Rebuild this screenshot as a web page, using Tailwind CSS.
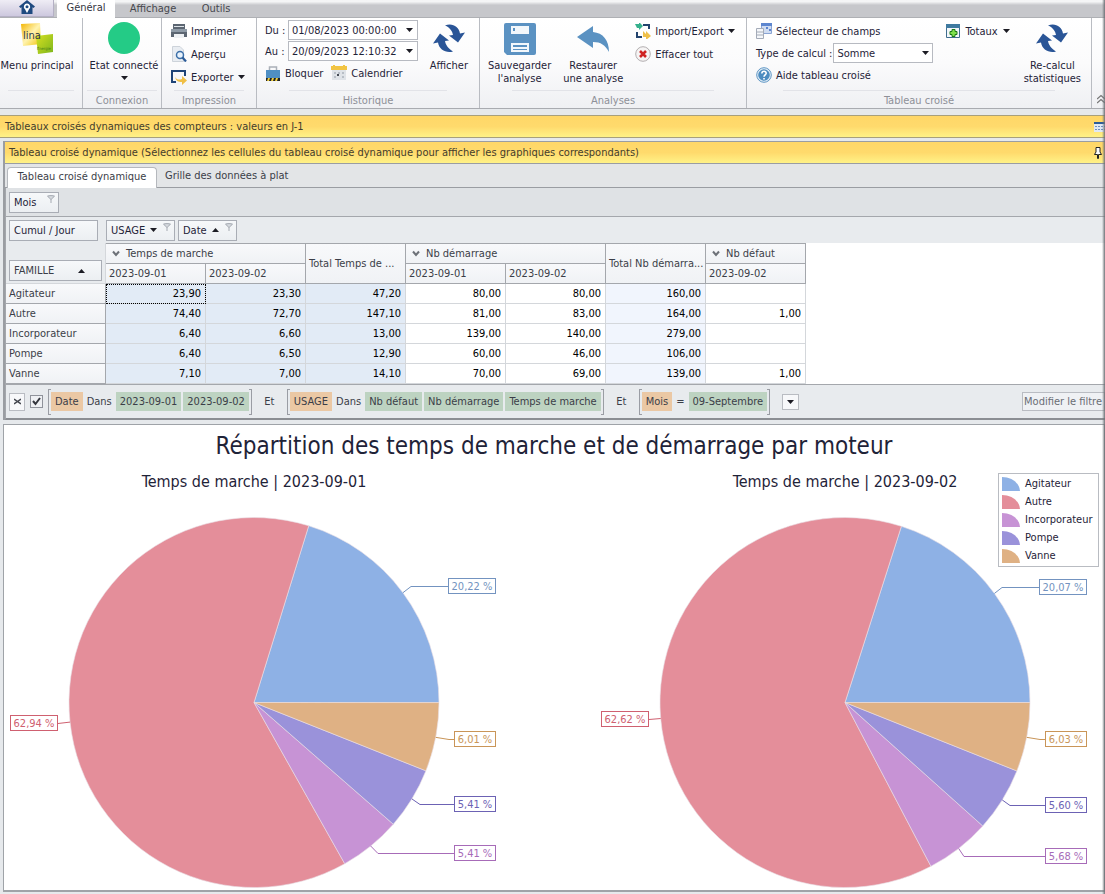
<!DOCTYPE html>
<html lang="fr">
<head>
<meta charset="utf-8">
<title>Tableaux croisés dynamiques</title>
<script src="https://cdn.jsdelivr.net/npm/@tailwindcss/browser@4"></script>
</head>
<body class="relative flex min-h-screen flex-col overflow-x-hidden bg-[#e6e9ec] font-['DejaVu_Sans_Condensed','Noto_Sans',sans-serif] text-[11px] leading-[13px] text-[#1f2338]">

<svg class="hidden">
  <defs>
    <symbol id="refresh" viewBox="0 0 32 32">
      <path fill="#2a5597" d="M12 3C19 0 26 4 27 11L32 10 25 20 16 13 20 12.500C19.500 9 17 5 12 3Z"/>
      <path fill="#2a5597" d="M20 29C13 31 6 27 5 20L0 21 7 11 16 18 12 18.500C12.500 22 15 26 20 29Z"/>
    </symbol>
    <symbol id="down" viewBox="0 0 7 4"><path fill="#1c1c24" d="M0 0H7L3.500 4Z"/></symbol>
    <symbol id="funnel" viewBox="0 0 8 8"><path fill="#d5d9de" stroke="#a4a9b1" d="M.5 1.200C2 .4 6 .4 7.500 1.200L4.500 4H3.500L.5 1.200ZM4 4V8"/></symbol>
    <symbol id="chev" viewBox="0 0 8 7"><path fill="none" stroke="#6d7178" stroke-width="2" d="M1 1.500L4 5 7 1.500"/></symbol>
  </defs>
</svg>

<!-- Ribbon tabs -->
<nav class="flex h-[18px] items-stretch border-b border-[#aeb0b4] bg-linear-to-b from-[#f4f5f6] from-10% to-[#c6c7cb] to-30% text-[#46484e]">
  <button aria-label="Accueil" class="flex w-[54px] items-start justify-center border-r border-b border-[#b4b0c4] bg-linear-to-b from-[#efedf5] to-[#cdc8de]">
    <svg class="h-[14px] w-4" viewBox="0 0 16 14"><path fill="#1f4a80" d="M8 0L16 6.500 14.500 8 13.500 7.300V14H2.500V7.300L1.500 8 0 6.500Z"/><path fill="#fff" d="M8 3.500A3.200 3.200 0 0 1 10 9.200L8 13 6 9.200A3.200 3.200 0 0 1 8 3.500Z"/><circle cx="8" cy="6.800" r="1.500" fill="#1f4a80"/></svg>
  </button>
  <button class="-mb-px ml-[3px] w-[58px] bg-white pb-[3px] text-[#33353f]">Général</button>
  <button class="w-[76px] pb-px">Affichage</button>
  <button class="w-[50px] pb-px">Outils</button>
</nav>

<!-- Ribbon -->
<header class="flex h-[91px] shrink-0 overflow-hidden border-b border-[#a9abb0] bg-linear-to-b from-white via-[#fbfbfc] to-[#eff0f3]">
  <section class="flex w-[83px] shrink-0 flex-col border-r border-[#b9bcc2]">
    <button class="flex flex-1 flex-col items-center gap-1 pt-1 pr-2 whitespace-nowrap">
      <svg class="h-[33px] w-8" viewBox="0 0 32 33">
        <defs><linearGradient id="ly" x2="1" y2="1"><stop stop-color="#f3b400"/><stop offset=".5" stop-color="#fff3b0"/><stop offset="1" stop-color="#f2c100"/></linearGradient><linearGradient id="lg" x2="1" y2="1"><stop stop-color="#d9e021"/><stop offset="1" stop-color="#7db61c"/></linearGradient></defs>
        <path fill="url(#ly)" d="M0 2L19 1 20 22 2 24Z"/><path fill="url(#lg)" d="M15 14L32 12V30L17 32Z"/>
        <text x="2" y="17" font-size="11" fill="#2d3a4a">lina</text><text x="16" y="28" font-size="4" fill="#47791b">Énergie</text>
      </svg>
      Menu principal
    </button>
    <div class="mx-2 h-[18px] border-t border-[#e2e3e8]"></div>
  </section>

  <section class="flex w-[79px] shrink-0 flex-col border-r border-[#b9bcc2]">
    <button class="flex flex-1 flex-col items-center gap-1 pt-1 pl-1 whitespace-nowrap">
      <span class="h-[33px] w-8"><span class="block size-8 rounded-full bg-[#24cb86]"></span></span>
      Etat connecté
      <svg class="h-1 w-[7px]"><use href="#down"/></svg>
    </button>
    <h2 class="mx-1 h-[18px] border-t border-[#e2e3e8] pt-[3px] text-center text-[#8e9098]">Connexion</h2>
  </section>

  <section class="flex w-[95px] shrink-0 flex-col border-r border-[#b9bcc2]">
    <div class="flex flex-1 flex-col items-start gap-[5px] pt-1 pl-[9px]">
      <button class="flex h-[18px] items-center gap-1"><svg class="size-4" viewBox="0 0 16 16"><path fill="#5c6672" d="M2 1H14V6H2Z"/><path fill="#dde3e8" d="M3 3H13V4H3Z"/><path fill="#8f9ba7" d="M0 6H16V9H0Z"/><path fill="#5c6672" d="M0 9H16V14H0Z"/><path fill="#eef1f4" d="M3 11H13V15H3Z"/></svg>Imprimer</button>
      <button class="flex h-[18px] items-center gap-1"><svg class="size-4" viewBox="0 0 16 16"><path fill="#e9edf2" stroke="#cdd3da" d="M1.500.5H9L12.500 4V15.500H1.500Z"/><circle cx="9" cy="9" r="3.500" fill="#e8f2fc" stroke="#3a6ea8" stroke-width="1.500"/><path stroke="#2c5c98" stroke-width="2.200" d="M11.500 11.500L15 15.500"/></svg>Aperçu</button>
      <button class="flex h-[18px] items-center gap-1"><svg class="size-4" viewBox="0 0 16 16"><path fill="none" stroke="#1f4478" stroke-width="2" d="M5 13H1V2H14V7"/><path fill="#f0bf45" d="M4 8C6 11 8 11 11 10V7L16 11.500 11 16V13C7 13 5 12 4 8Z"/></svg>Exporter<svg class="h-1 w-[7px]"><use href="#down"/></svg></button>
    </div>
    <h2 class="mx-3 h-[18px] border-t border-[#e2e3e8] pt-[3px] text-center text-[#8e9098]">Impression</h2>
  </section>

  <section class="flex w-[223px] shrink-0 flex-col border-r border-[#b9bcc2]">
    <div class="flex flex-1 justify-between pt-[2px] pr-[11px] pl-2">
      <div class="flex flex-col gap-px">
        <label class="flex items-center"><span class="w-[23px]">Du :</span>
          <span class="flex h-5 w-[130px] items-center border border-[#b7bac1] bg-white pr-1"><input value="01/08/2023 00:00:00" class="w-full min-w-0 pl-[3px] outline-none"><svg class="h-1 w-[7px] shrink-0"><use href="#down"/></svg></span></label>
        <label class="flex items-center"><span class="w-[23px]">Au :</span>
          <span class="flex h-5 w-[130px] items-center border border-[#b7bac1] bg-white pr-1"><input value="20/09/2023 12:10:32" class="w-full min-w-0 pl-[3px] outline-none"><svg class="h-1 w-[7px] shrink-0"><use href="#down"/></svg></span></label>
        <div class="flex gap-2 pt-[3px]">
          <button class="flex items-center gap-1"><svg class="size-4" viewBox="0 0 16 16"><path fill="none" stroke="#aab0b8" stroke-width="1.500" d="M4.500 6V2H11.500V6"/><path fill="#4f8fc4" d="M1 5H15V13H1Z"/><path fill="#222" d="M1 13H15V16H1Z"/><path fill="#f0cf3e" d="M3 13H5L4 16H2ZM7 13H9L8 16H6ZM11 13H13L12 16H10Z"/></svg>Bloquer</button>
          <button class="flex items-center gap-1"><svg class="size-4" viewBox="0 0 16 16"><path fill="#dfe3e8" d="M1 3H15V15H1Z"/><path fill="#f2c443" d="M0 1H2V0H4V1H12V0H14V1H16V5H0Z"/><path fill="#b8bec6" d="M3 7H5V9H3ZM7 7H9V9H7ZM11 7H13V9H11ZM3 11H5V13H3ZM11 11H13V13H11Z"/><path fill="#454b55" d="M6 9H8V11H6Z"/></svg>Calendrier</button>
        </div>
      </div>
      <button class="flex flex-col items-center gap-1 pt-[2px]"><svg class="h-[33px] w-8"><use href="#refresh"/></svg>Afficher</button>
    </div>
    <h2 class="mx-8 h-[18px] border-t border-[#e2e3e8] pt-[3px] text-center text-[#8e9098]">Historique</h2>
  </section>

  <section class="flex w-[267px] shrink-0 flex-col border-r border-[#b9bcc2]">
    <div class="flex flex-1 gap-3 pt-1 pl-2 whitespace-nowrap">
      <button class="flex flex-col items-center gap-1"><svg class="h-[33px] w-8" viewBox="0 0 32 33"><path fill="#5b92c2" d="M2 1H30Q32 1 32 3V31Q32 33 30 33H3L0 30V3Q0 1 2 1Z"/><path fill="#f2f7fb" d="M7 4H25V12H7ZM7 21H25V30H7Z"/><path fill="#5b92c2" d="M9 6H11V9H9ZM9 23H23V25H9ZM9 27H23V28H9Z"/></svg><span>Sauvegarder<br>l'analyse</span></button>
      <button class="flex flex-col items-center gap-1"><svg class="h-[33px] w-8" viewBox="0 0 32 33"><path fill="#5b92c2" d="M0 15L16 4V10C26 11 32 18 32 30 28 23 24 20 16 20V26Z"/></svg><span>Restaurer<br>une analyse</span></button>
      <div class="flex flex-col items-start gap-[5px]">
        <button class="flex h-[18px] items-center gap-1"><svg class="size-4" viewBox="0 0 16 16"><path fill="none" stroke="#23446e" stroke-width="2" d="M8 2H14V6M7 14H2V9"/><path fill="#35b08c" d="M0 1H4V-1L8 3 4 7V5H2Z"/><path fill="#efc04a" d="M8 8L11 11V8L16 13 11 17V14H8Z"/></svg>Import/Export<svg class="h-1 w-[7px]"><use href="#down"/></svg></button>
        <button class="flex h-[18px] items-center gap-1"><svg class="size-4" viewBox="0 0 16 16"><circle cx="8" cy="8" r="7.300" fill="#f6f4f4" stroke="#b3afb1"/><path stroke="#cf2323" stroke-width="2.600" d="M5 5L11 11M11 5L5 11"/></svg>Effacer tout</button>
      </div>
    </div>
    <h2 class="mx-8 h-[18px] border-t border-[#e2e3e8] pt-[3px] text-center text-[#8e9098]">Analyses</h2>
  </section>

  <section class="flex min-w-[345px] flex-1 flex-col border-r border-[#b9bcc2]">
    <div class="flex flex-1 items-start justify-between pt-1 pr-[10px] pl-[9px] whitespace-nowrap">
      <div class="flex flex-col items-start gap-[3px]">
        <button class="flex h-[18px] items-center gap-1"><svg class="size-4" viewBox="0 0 16 16"><path fill="#cfdcf2" stroke="#8aa4d4" d="M5.500.5H15.500V10.500H5.500Z"/><path fill="#5d86cf" d="M5 0H16V3H5ZM10 4H12V6H10ZM13 6H15V8H13Z"/><path fill="#f5f7fa" stroke="#a4abb8" d="M.5 5.500H7.500V15.500H.5ZM1 9H7M1 12H7"/></svg>Sélecteur de champs</button>
        <label class="flex h-5 items-center gap-px">Type de calcul :
          <span class="relative flex items-center"><select class="h-5 w-[100px] appearance-none border border-[#b7bac1] bg-white pl-[3px]"><option>Somme</option></select><svg class="pointer-events-none absolute right-1 h-1 w-[7px]"><use href="#down"/></svg></span></label>
        <button class="flex h-[18px] items-center gap-1"><svg class="size-4" viewBox="0 0 16 16"><circle cx="8" cy="8" r="7.300" fill="#e6f0f8" stroke="#5f96c4"/><circle cx="8" cy="8" r="5.800" fill="#4d8cc0"/><path fill="none" stroke="#fff" stroke-width="1.600" d="M5.800 6.500C6 3.500 10.300 3.700 10.200 6.300 10.100 7.800 8 8 8 9.700M8 11V12.600"/></svg>Aide tableau croisé</button>
      </div>
      <div class="flex items-start gap-[14px]">
        <button class="flex h-[18px] items-center gap-[5px]"><svg class="h-4 w-[14px]" viewBox="0 0 14 16"><path fill="#f3f7fa" stroke="#3f6d8e" d="M.5 1.500H13.500V14.500H.5Z"/><path fill="#3f7aa0" d="M0 1H14V5H0Z"/><path fill="#7fe04c" stroke="#1d7a17" d="M6 6.500H9V8.500H11V11.500H9V13.500H6V11.500H4V8.500H6Z"/></svg>Totaux<svg class="h-1 w-[7px]"><use href="#down"/></svg></button>
        <button class="flex flex-col items-center gap-1"><svg class="h-[33px] w-8"><use href="#refresh"/></svg><span>Re-calcul<br>statistiques</span></button>
      </div>
    </div>
    <h2 class="mx-9 h-[18px] border-t border-[#e2e3e8] pt-[3px] text-center text-[#8e9098]">Tableau croisé</h2>
  </section>
  <div class="flex w-[13px] shrink-0 items-end justify-end pb-1"><svg class="h-[10px] w-2" viewBox="0 0 8 10"><path fill="none" stroke="#777" stroke-width="1.300" d="M0 5L4 1.500 8 5M0 9L4 5.500 8 9"/></svg></div>
</header>

<!-- Page caption -->
<h1 class="mt-[6px] flex h-[23px] shrink-0 items-center justify-between border-y border-[#a8a07c] bg-linear-to-b from-[#ffd768] via-[#ffda6c] to-[#fff287] pl-[5px] text-[#433d2c]">
  Tableaux croisés dynamiques des compteurs : valeurs en J-1
  <svg class="h-3 w-[11px]" viewBox="0 0 11 12"><path fill="#dfe8f4" d="M0 1H11V11H0Z"/><path fill="#2c5c98" d="M0 1H11V3H0Z"/><path stroke="#6f8fbe" stroke-dasharray="2 1" d="M1 5.500H11M1 8.500H11"/></svg>
</h1>

<!-- Pivot panel -->
<main class="mt-[3px] ml-[3px] flex flex-col border-l-2 border-[#9a9da2]">
  <h2 class="flex h-[23px] items-center justify-between border-y border-[#9a9da2] bg-linear-to-b from-[#ffd768] via-[#ffda6c] to-[#fff287] pr-[3px] pl-1 text-[#433d2c]">
    Tableau croisé dynamique (Sélectionnez les cellules du tableau croisé dynamique pour afficher les graphiques correspondants)
    <svg class="h-3 w-2" viewBox="0 0 8 12"><path fill="#fff" stroke="#222" d="M2 .5H6V5L7.500 7.500H4.500V11.500H3.500V7.500H.5L2 5Z"/></svg>
  </h2>
  <div class="flex h-6 items-stretch border-b border-[#9a9da2] bg-[#e3e5e7] pl-[2px] text-[#3b3e48]">
    <button class="mt-[3px] -mb-px w-[150px] rounded-t-sm border border-b-0 border-[#b5b8bd] bg-white pb-1">Tableau croisé dynamique</button>
    <button class="px-2 pb-px">Grille des données à plat</button>
  </div>
  <div class="flex h-[29px] items-center border-b border-l border-[#a4a7ac] bg-[#dfe2e5] pl-[3px]">
    <button class="flex h-[21px] w-[50px] items-start justify-between border border-[#a9adb5] bg-linear-to-b from-[#f6f8fa] to-[#eceff2] pt-[2px] pr-[3px] pl-1"><span class="pt-px">Mois</span><svg class="size-2"><use href="#funnel"/></svg></button>
  </div>
  <div class="flex h-[26px] items-center border-l border-[#a4a7ac] bg-[#e8ebee] pl-[3px]">
    <button class="mr-2 h-[21px] w-[89px] border border-[#a9adb5] bg-linear-to-b from-[#f6f8fa] to-[#eceff2] pl-1 text-left">Cumul / Jour</button>
    <button class="mr-[3px] flex h-[21px] w-[69px] items-start justify-between border border-[#a9adb5] bg-linear-to-b from-[#f6f8fa] to-[#eceff2] pt-[2px] pr-[3px] pl-1"><span class="flex items-center gap-[5px] pt-px">USAGE<svg class="h-1 w-[7px]"><use href="#down"/></svg></span><svg class="size-2"><use href="#funnel"/></svg></button>
    <button class="flex h-[21px] w-[59px] items-start justify-between border border-[#a9adb5] bg-linear-to-b from-[#f6f8fa] to-[#eceff2] pt-[2px] pr-[3px] pl-1"><span class="flex items-center gap-[5px] pt-px">Date<svg class="h-1 w-[7px] rotate-180"><use href="#down"/></svg></span><svg class="size-2"><use href="#funnel"/></svg></button>
  </div>
  <div class="border-l border-[#a4a7ac] bg-white">
    <table class="w-[800px] table-fixed border-separate border-spacing-0 text-[#3b3e48] [&_td]:h-5 [&_td]:border-r [&_td]:border-b [&_td]:border-[#d4d7db] [&_td]:p-0 [&_td]:pr-1 [&_td]:text-right [&_td]:text-black [&_th]:h-5 [&_th]:border-r [&_th]:border-b [&_th]:border-[#a4a7ac] [&_th]:bg-linear-to-b [&_th]:from-[#f8f9fb] [&_th]:to-[#f0f2f5] [&_th]:p-0 [&_th]:pl-[3px] [&_th]:text-left [&_th]:font-normal">
      <colgroup><col class="w-[100px]"><col span="7"></colgroup>
      <thead>
        <tr class="h-[21px]">
          <td rowspan="2" class="bg-[#e8ebee] align-bottom"><button class="mb-[2px] ml-[3px] flex h-[21px] w-[93px] items-center justify-between border border-[#a9adb5] bg-linear-to-b from-[#f6f8fa] to-[#eceff2] pr-4 pl-1 text-[#3b3e48]">FAMILLE<svg class="h-1 w-[7px] rotate-180"><use href="#down"/></svg></button></td>
          <th colspan="2" class="border-t"><span class="flex items-center gap-[6px] pl-[3px]"><svg class="h-[7px] w-2"><use href="#chev"/></svg>Temps de marche</span></th>
          <th rowspan="2" class="truncate border-t">Total Temps de ...</th>
          <th colspan="2" class="border-t"><span class="flex items-center gap-[6px] pl-[3px]"><svg class="h-[7px] w-2"><use href="#chev"/></svg>Nb démarrage</span></th>
          <th rowspan="2" class="truncate border-t">Total Nb démarra...</th>
          <th class="border-t"><span class="flex items-center gap-[6px] pl-[3px]"><svg class="h-[7px] w-2"><use href="#chev"/></svg>Nb défaut</span></th>
        </tr>
        <tr><th>2023-09-01</th><th>2023-09-02</th><th>2023-09-01</th><th>2023-09-02</th><th>2023-09-02</th></tr>
      </thead>
      <tbody class="[&_td:nth-child(-n+4)]:bg-[#e2ebf6] [&_td:nth-child(7)]:bg-[#f1f5fd]">
        <tr><th>Agitateur</th><td class="outline outline-dotted outline-black -outline-offset-1">23,90</td><td>23,30</td><td>47,20</td><td>80,00</td><td>80,00</td><td>160,00</td><td></td></tr>
        <tr><th>Autre</th><td>74,40</td><td>72,70</td><td>147,10</td><td>81,00</td><td>83,00</td><td>164,00</td><td>1,00</td></tr>
        <tr><th>Incorporateur</th><td>6,40</td><td>6,60</td><td>13,00</td><td>139,00</td><td>140,00</td><td>279,00</td><td></td></tr>
        <tr><th>Pompe</th><td>6,40</td><td>6,50</td><td>12,90</td><td>60,00</td><td>46,00</td><td>106,00</td><td></td></tr>
        <tr><th>Vanne</th><td>7,10</td><td>7,00</td><td>14,10</td><td>70,00</td><td>69,00</td><td>139,00</td><td>1,00</td></tr>
      </tbody>
    </table>
  </div>
  <!-- Filter bar -->
  <div class="flex h-9 items-center border-t border-b-2 border-l border-[#a4a7ac] border-b-[#8b8e93] bg-[#e8ebee] pl-[3px] whitespace-nowrap text-[#3b3e48]">
    <button aria-label="Fermer" class="mr-[5px] flex h-[18px] w-4 items-center justify-center border border-[#b9bcc2] bg-[#f7f8fa]"><svg class="size-[7px]" viewBox="0 0 7 7"><path stroke="#44474f" stroke-width="1.500" d="M0 1L7 6M7 1L0 6"/></svg></button>
    <label class="relative mr-[5px] flex size-[13px]"><input type="checkbox" checked aria-label="Filtre actif" class="size-[13px] appearance-none border border-[#8f939b] bg-[#eef0f3]"><svg class="pointer-events-none absolute inset-0 size-[13px]" viewBox="0 0 13 13"><path fill="none" stroke="#33363d" stroke-width="2" d="M3 6L5.500 9 10 3"/></svg></label>
    <div class="flex h-[26px] items-center"><i class="h-full w-[3px] border-y border-l border-[#9a9da4]"></i><span class="bg-[#ebc8a4] px-1 py-[3px]">Date</span><span class="px-1">Dans</span><span class="mr-[2px] bg-[#bdd3c1] px-1 py-[3px]">2023-09-01</span><span class="bg-[#bdd3c1] px-1 py-[3px]">2023-09-02</span><i class="h-full w-[3px] border-y border-r border-[#9a9da4]"></i></div>
    <span class="w-[35px] text-center">Et</span>
    <div class="flex h-[26px] items-center"><i class="h-full w-[3px] border-y border-l border-[#9a9da4]"></i><span class="bg-[#ebc8a4] px-1 py-[3px]">USAGE</span><span class="px-1">Dans</span><span class="mr-[2px] bg-[#bdd3c1] px-1 py-[3px]">Nb défaut</span><span class="mr-[2px] bg-[#bdd3c1] px-1 py-[3px]">Nb démarrage</span><span class="bg-[#bdd3c1] px-1 py-[3px]">Temps de marche</span><i class="h-full w-[3px] border-y border-r border-[#9a9da4]"></i></div>
    <span class="w-[35px] text-center">Et</span>
    <div class="flex h-[26px] items-center"><i class="h-full w-[3px] border-y border-l border-[#9a9da4]"></i><span class="bg-[#ebc8a4] px-1 py-[3px]">Mois</span><span class="px-1">=</span><span class="bg-[#bdd3c1] px-1 py-[3px]">09-Septembre</span><i class="h-full w-[3px] border-y border-r border-[#9a9da4]"></i></div>
    <button aria-label="Filtres récents" class="ml-3 flex h-4 w-[17px] items-center justify-center border border-[#b9bcc2] bg-[#f7f8fa]"><svg class="h-1 w-[7px]"><use href="#down"/></svg></button>
    <button class="ml-auto h-[19px] border border-[#b9bcc2] bg-[#eff1f4] pr-[2px] pl-px text-[#6a6d75]">Modifier le filtre</button>
  </div>
</main>

<!-- Charts -->
<section class="relative mt-1 mb-[2px] ml-[3px] flex flex-1 flex-col border border-b-2 border-[#9fa3a8] bg-white">
  <h2 class="pt-[5px] text-center text-2xl">Répartition des temps de marche et de démarrage par moteur</h2>
  <div class="flex justify-between pr-[9px]">
    <figure class="w-[500px]"><figcaption class="pt-1 pb-[2px] text-center text-base leading-8">Temps de marche | 2023-09-01</figcaption><svg id="pie1" class="block h-[389px] w-full" viewBox="0 0 500 389"></svg></figure>
    <figure class="w-[500px]"><figcaption class="pt-1 pb-[2px] text-center text-base leading-8">Temps de marche | 2023-09-02</figcaption><svg id="pie2" class="block h-[389px] w-full" viewBox="0 0 500 389"></svg></figure>
  </div>
  <ul class="absolute top-12 right-[5px] w-[101px] border border-[#b9bcc2] bg-white py-px pl-[3px] leading-[18px] [&_li]:flex [&_li]:items-center [&_li]:gap-[5px]">
    <li><svg class="h-[14px] w-[18px]"><path fill="#8eb1e5" d="M0 0C9 0 17 5 18 14H0Z"/></svg>Agitateur</li>
    <li><svg class="h-[14px] w-[18px]"><path fill="#e48e9a" d="M0 0C9 0 17 5 18 14H0Z"/></svg>Autre</li>
    <li><svg class="h-[14px] w-[18px]"><path fill="#c793d5" d="M0 0C9 0 17 5 18 14H0Z"/></svg>Incorporateur</li>
    <li><svg class="h-[14px] w-[18px]"><path fill="#9a92da" d="M0 0C9 0 17 5 18 14H0Z"/></svg>Pompe</li>
    <li><svg class="h-[14px] w-[18px]"><path fill="#dfb184" d="M0 0C9 0 17 5 18 14H0Z"/></svg>Vanne</li>
  </ul>
</section>

<div class="pointer-events-none absolute inset-y-0 right-0 w-[3px] bg-linear-to-r from-transparent to-[#6f7378]"></div>

<script>
// Slices run counter-clockwise from east: [percent, fill, ink, label x, label y, label width, elbow x]
const pies = {
  pie1: [
    [20.22, '#8eb1e5', '#7393c0', 444, 86, 48, 407],
    [62.94, '#e48e9a', '#cf6070', 6, 223, 48, null],
    [5.41, '#c793d5', '#a76bb8', 450, 353, 42, 374],
    [5.41, '#9a92da', '#6c62b4', 450, 304, 42, 416],
    [6.01, '#dfb184', '#c99558', 450, 239, 42, 445],
  ],
  pie2: [
    [20.07, '#8eb1e5', '#7393c0', 444, 87, 48, 407],
    [62.62, '#e48e9a', '#cf6070', 6, 219, 48, null],
    [5.68, '#c793d5', '#a76bb8', 450, 356, 42, 369],
    [5.60, '#9a92da', '#6c62b4', 450, 305, 42, 415],
    [6.03, '#dfb184', '#c99558', 450, 239, 42, 445],
  ],
};
const cx = 250, cy = 202.5, r = 185;
const at = t => [cx + r * Math.cos(t * 2 * Math.PI / 100), cy - r * Math.sin(t * 2 * Math.PI / 100)];
for (const [id, slices] of Object.entries(pies)) {
  let t = 0, wedges = '', labels = '';
  for (const [pct, fill, ink, x, y, w, elbow] of slices) {
    const a = at(t), b = at(t + pct), m = at(t + pct / 2);
    wedges += `<path d="M${cx} ${cy}L${a}A${r} ${r} 0 ${pct > 50 ? 1 : 0} 0 ${b}Z" fill="${fill}" stroke="#e9dfe6" stroke-width=".6"/>`;
    const line = elbow ? `M${m}L${elbow} ${y + .5}H${x}` : `M${m}L${x + w} ${y + .5}`;
    labels += `<path d="${line}" fill="none" stroke="${ink}"/><rect x="${x + .5}" y="${y - 7.5}" width="${w - 1}" height="15" fill="#fff" stroke="${ink}"/>`
      + `<text x="${x + w / 2}" y="${y + 4}" text-anchor="middle" font-size="11" fill="${ink}">${pct.toFixed(2).replace('.', ',')} %</text>`;
    t += pct;
  }
  document.getElementById(id).innerHTML = wedges + labels;
}
</script>
</body>
</html>
